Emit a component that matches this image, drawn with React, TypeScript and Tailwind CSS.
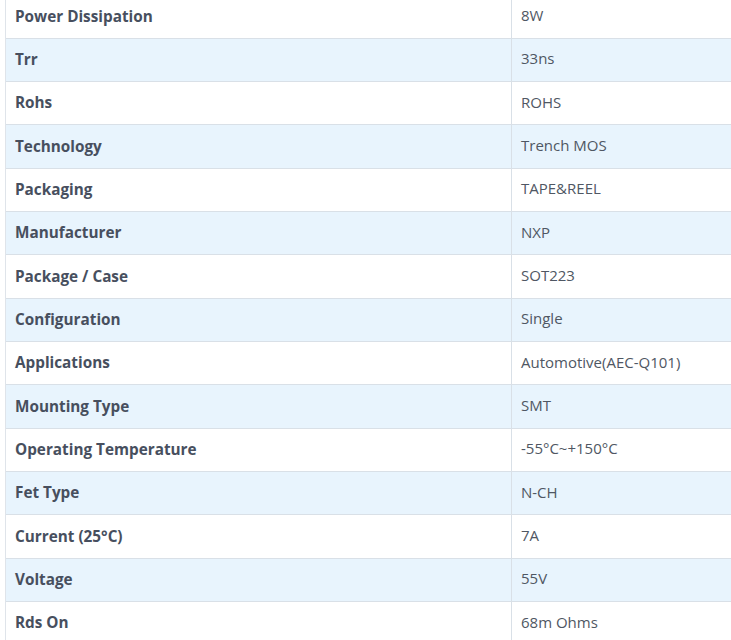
import React from "react";

const rows: [string, string][] = [
  ["Power Dissipation", "8W"],
  ["Trr", "33ns"],
  ["Rohs", "ROHS"],
  ["Technology", "Trench MOS"],
  ["Packaging", "TAPE&REEL"],
  ["Manufacturer", "NXP"],
  ["Package / Case", "SOT223"],
  ["Configuration", "Single"],
  ["Applications", "Automotive(AEC-Q101)"],
  ["Mounting Type", "SMT"],
  ["Operating Temperature", "-55°C~+150°C"],
  ["Fet Type", "N-CH"],
  ["Current (25°C)", "7A"],
  ["Voltage", "55V"],
  ["Rds On", "68m Ohms"],
];

export default function App() {
  return (
    <div className="w-[731px] h-[640px] overflow-hidden bg-white" style={{ fontFamily: '"Open Sans", sans-serif' }}>
      <div className="ml-[5px] mt-[-4.5px] border-l border-[#dfe4ea]">
        {rows.map(([k, v], i) => (
          <div
            key={k}
            className={`flex h-[43.33px] border-b border-[#d9e0e7] ${i % 2 === 1 ? "bg-[#e8f4fd]" : "bg-white"}`}
          >
            <div className="w-[506px] shrink-0 border-r border-[#d9e0e7] pl-[9px] pb-[1px] flex items-center text-[15.3px] font-bold text-[#474f5e]">
              {k}
            </div>
            <div className="flex-1 pl-[9px] pb-[3px] flex items-center text-[15px] text-[#4f5763]">{v}</div>
          </div>
        ))}
      </div>
    </div>
  );
}
